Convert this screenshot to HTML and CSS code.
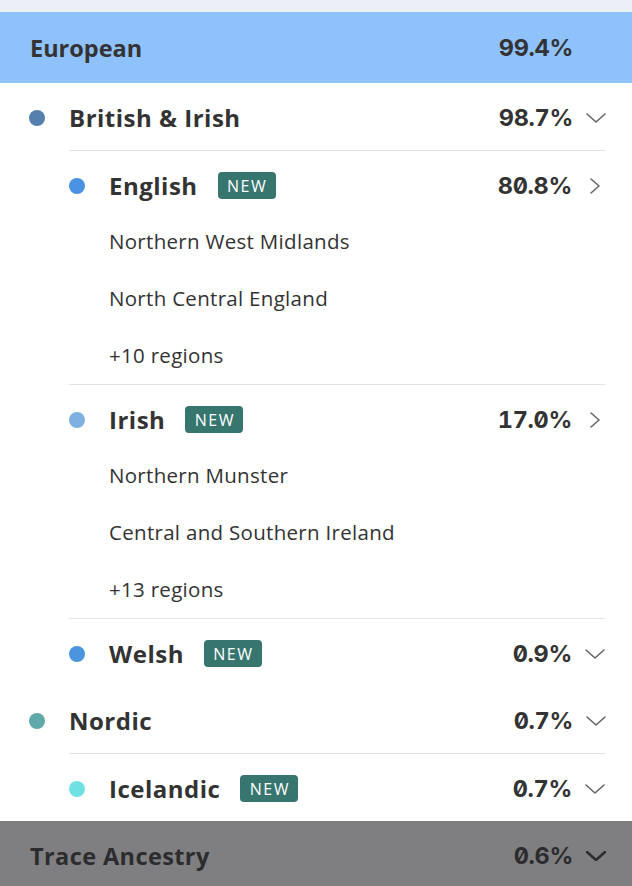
FILE: index.html
```html
<!DOCTYPE html>
<html>
<head>
<meta charset="utf-8">
<link rel="stylesheet" href="styles.css">
</head>
<body>
<div class="topstrip"></div>
<div class="region-bar">
  <span class="bar-name">European</span>
  <span class="pct">99.4%</span>
  <span class="icon"></span>
</div>

<div class="row lvl1">
  <span class="dot" style="background:#5580ad"></span>
  <span class="name">British &amp; Irish</span>
  <span class="pct">98.7%</span>
  <span class="icon"><svg viewBox="0 0 20 10" width="20" height="10"><path d="M1 1 L10 9 L19 1" class="chev"/></svg></span>
</div>

<div class="group">
  <div class="item">
    <div class="row lvl2 has-subs">
      <span class="dot" style="background:#4a93e3"></span>
      <span class="name">English</span>
      <span class="badge">NEW</span>
      <span class="pct">80.8%</span>
      <span class="icon"><svg viewBox="0 0 10 16" width="10" height="16"><path d="M1 1 L9 8 L1 15" class="chev"/></svg></span>
    </div>
    <div class="sub">Northern West Midlands</div>
    <div class="sub">North Central England</div>
    <div class="sub">+10 regions</div>
  </div>
  <div class="item">
    <div class="row lvl2 has-subs">
      <span class="dot" style="background:#7fb1e0"></span>
      <span class="name">Irish</span>
      <span class="badge">NEW</span>
      <span class="pct">17.0%</span>
      <span class="icon"><svg viewBox="0 0 10 16" width="10" height="16"><path d="M1 1 L9 8 L1 15" class="chev"/></svg></span>
    </div>
    <div class="sub">Northern Munster</div>
    <div class="sub">Central and Southern Ireland</div>
    <div class="sub">+13 regions</div>
  </div>
  <div class="item">
    <div class="row lvl2">
      <span class="dot" style="background:#4b94de"></span>
      <span class="name">Welsh</span>
      <span class="badge">NEW</span>
      <span class="pct">0.9%</span>
      <span class="icon"><svg viewBox="0 0 20 10" width="20" height="10"><path d="M1 1 L10 9 L19 1" class="chev"/></svg></span>
    </div>
  </div>
</div>

<div class="row lvl1">
  <span class="dot" style="background:#5faaa9"></span>
  <span class="name">Nordic</span>
  <span class="pct">0.7%</span>
  <span class="icon"><svg viewBox="0 0 20 10" width="20" height="10"><path d="M1 1 L10 9 L19 1" class="chev"/></svg></span>
</div>

<div class="group">
  <div class="item">
    <div class="row lvl2">
      <span class="dot" style="background:#6fe0e3"></span>
      <span class="name">Icelandic</span>
      <span class="badge">NEW</span>
      <span class="pct">0.7%</span>
      <span class="icon"><svg viewBox="0 0 20 10" width="20" height="10"><path d="M1 1 L10 9 L19 1" class="chev"/></svg></span>
    </div>
  </div>
</div>

<div class="region-bar trace">
  <span class="bar-name">Trace Ancestry</span>
  <span class="pct">0.6%</span>
  <span class="icon"><svg viewBox="0 0 20 10" width="20" height="10"><path d="M1 1 L10 9 L19 1" class="chev dark"/></svg></span>
</div>
</body>
</html>
```

FILE: styles.css
```css
* { box-sizing: border-box; }
html, body {
  margin: 0;
  padding: 0;
  background: #ffffff;
  color: #333333;
  font-family: "Open Sans", "Noto Sans", sans-serif;
  height: 886px;
  overflow: hidden;
}
.topstrip {
  height: 12px;
  background: #eceff7;
}
.region-bar {
  height: 71px;
  background: #8fc1fa;
  display: flex;
  align-items: center;
  padding: 0 26px 0 30px;
}
.region-bar .bar-name {
  flex: 1;
  font-size: 23.5px;
  font-weight: 700;
  letter-spacing: 0;
}
.region-bar.trace {
  height: 65px;
  background: #7f7f81;
  color: #2c2c2f;
  padding-top: 4px;
}
.region-bar.trace .bar-name {
  letter-spacing: 0.4px;
}
.pct {
  font-family: Inter, "DejaVu Sans", sans-serif;
  font-feature-settings: "zero" 1, "tnum" 1;
  font-size: 23.5px;
  font-weight: 700;
  letter-spacing: -0.3px;
}
.icon {
  width: 20px;
  margin-left: 13px;
  display: flex;
  justify-content: center;
  align-items: center;
}
.chev {
  fill: none;
  stroke: #666666;
  stroke-width: 1.6;
  stroke-linecap: round;
  stroke-linejoin: round;
}
.chev.dark {
  stroke: #2c2c2f;
  stroke-width: 2.4;
}
.row {
  display: flex;
  align-items: center;
  height: 67px;
  padding: 3px 26px 0 0;
}
.row .name {
  font-size: 24px;
  font-weight: 700;
  letter-spacing: 0.5px;
  margin-bottom: 2px;
}
.row .pct {
  margin-left: auto;
  margin-bottom: 2px;
}
.row.lvl1 { padding-left: 29px; }
.row.lvl2 { padding-left: 0; }
.row.has-subs {
  height: 62px;
  padding-top: 8px;
}
.dot {
  width: 16px;
  height: 16px;
  border-radius: 50%;
  margin-right: 24px;
  flex: none;
}
.badge {
  margin-left: 20px;
  height: 27px;
  width: 58px;
  display: flex;
  align-items: center;
  justify-content: center;
  background: #37756f;
  color: #ffffff;
  border-radius: 4px;
  font-size: 16px;
  font-weight: 400;
  letter-spacing: 1.5px;
  padding-left: 1px;
  margin-bottom: 1px;
}
.group {
  padding-left: 69px;
}
.item {
  border-top: 1px solid #e3e3e3;
  margin-right: 27px;
}
.item .row {
  padding-right: 0;
}
.sub {
  height: 57px;
  display: flex;
  align-items: center;
  padding-left: 40px;
  padding-bottom: 1px;
  font-size: 20.5px;
  font-weight: 400;
  letter-spacing: 0.3px;
}
```
